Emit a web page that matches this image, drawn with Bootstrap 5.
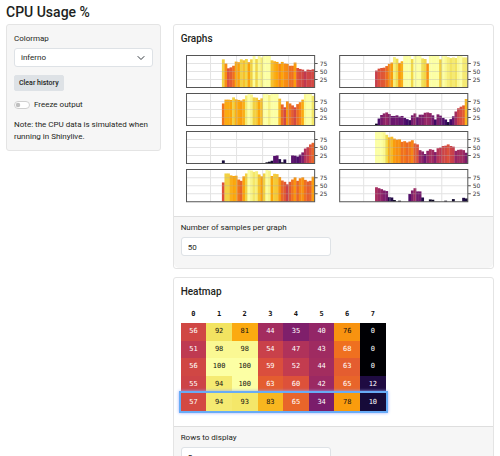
<!DOCTYPE html>
<html lang="en">
<head>
<meta charset="utf-8">
<meta name="viewport" content="width=device-width, initial-scale=1">
<title>CPU Usage %</title>
<link href="https://cdn.jsdelivr.net/npm/bootstrap@5.3.0/dist/css/bootstrap.min.css" rel="stylesheet">
<style>
  body { font: 400 8px/12px Roboto, "Liberation Sans", sans-serif; color: #1d1f21; background: #fff; }
  .page { padding: 5px 6px 12px; }
  h1 { font-size: 14px; line-height: 15px; font-weight: 500; margin: 0 0 4px; }
  h2 { font-size: 10px; line-height: 12px; font-weight: 500; margin: 0; }
  .panels { --bs-gutter-x: 12px; }
  .panel { border-color: #e4e4e4; border-radius: 3px; }
  .panel > .card-body { padding: 8px 7px 7px; }
  .panel > .card-footer { padding: 5px 7px 12px; min-height: 51px; background: #f6f6f6; border-color: #dedede; }
  .options { background: #f6f6f6; }
  .form-label { display: block; margin: 0 0 3px; }
  .form-select, .number-box { font-size: 8px; line-height: 12px; height: 19px; padding: 3px 6px 2px; border-color: #dee2e6; border-radius: 3px; color: #1d1f21; }
  .form-select { padding-right: 18px; background-position: right 7px center; background-size: 8px 8px; }
  .number-box { width: 49%; min-width: 150px; }
  .clear-btn { font-size: 7px; line-height: 10px; font-weight: 500; padding: 2px 4px; margin: 8px 0; border-radius: 2px; background: #dee2e6; border-color: #dee2e6; color: #1d1f21; }
  .freeze { padding: 0; margin: 0 0 8px; min-height: 12px; }
  .freeze .form-check-input { float: none; width: 16px; height: 8px; margin: 0; border-color: #d0d0d0; }
  .graph-body { min-height: 191px; }
  .graphs { display: block; width: 100%; margin-top: 10px; }
  .graphs text { font: 6px "DejaVu Sans", sans-serif; fill: #333; }
  .heat-body { min-height: 148px; }
  .heat { width: 205px; height: 106px; margin: 7px 0 0; table-layout: fixed; border-collapse: separate; border-spacing: 0; font: 7px/9px "DejaVu Sans Mono", monospace; text-align: center; color: #fff; }
  .heat th { height: 18px; font-weight: 700; color: #111; }
  .heat th, .heat td { padding: 0; vertical-align: middle; text-align: center; }
  .heat .dark-text { color: #111; }
  .heat .selected { outline: 2px solid #68acf6; box-shadow: 0 0 3px 2px #9dabff; }
</style>
</head>
<body>
<main class="container-fluid page">
  <h1>CPU Usage %</h1>
  <div class="row panels align-items-start">
    <aside class="col-4">
      <form class="card panel options">
        <div class="card-body">
          <label class="form-label" for="cmap">Colormap</label>
          <select class="form-select" id="cmap"><option>inferno</option><option>viridis</option></select>
          <button class="btn clear-btn" type="button">Clear history</button>
          <div class="form-check form-switch freeze d-flex align-items-center gap-1">
            <input class="form-check-input" type="checkbox" role="switch" id="freeze">
            <label for="freeze">Freeze output</label>
          </div>
          <p class="mb-0">Note: the CPU data is simulated when running in Shinylive.</p>
        </div>
      </form>
    </aside>
    <div class="col-8 d-flex flex-column gap-2">
      <section class="card panel">
        <div class="card-body graph-body">
          <h2>Graphs</h2>
          <svg class="graphs" id="graphs" viewBox="0 0 305 152" role="img" aria-label="CPU usage history"></svg>
        </div>
        <div class="card-footer">
          <label class="form-label" for="samples">Number of samples per graph</label>
          <input class="form-control number-box" type="number" id="samples" value="50">
        </div>
      </section>
      <section class="card panel">
        <div class="card-body heat-body">
          <h2>Heatmap</h2>
          <table class="heat">
            <thead><tr><th>0</th><th>1</th><th>2</th><th>3</th><th>4</th><th>5</th><th>6</th><th>7</th></tr></thead>
            <tbody id="heat"></tbody>
          </table>
        </div>
        <div class="card-footer">
          <label class="form-label" for="rows">Rows to display</label>
          <input class="form-control number-box" type="number" id="rows" value="5">
        </div>
      </section>
    </div>
  </div>
</main>
<script src="https://cdn.jsdelivr.net/npm/bootstrap@5.3.0/dist/js/bootstrap.bundle.min.js"></script>
<script>
  // CPU load history, one list per core, oldest sample first
  const history36 = [
    [88,75,60,63,68,81,79,88,85,89,79,88,99,89,98,94,100,100,100,85,82,80,74,80,75,74,68,68,78,61,58,56,51,56,55,57],
    [53,59,61,62,67,74,78,95,90,77,82,100,100,100,89,100,100,100,91,89,75,100,100,100,100,88,100,98,95,92,94,92,98,100,94,94],
    [69,81,81,80,88,82,80,78,82,94,100,97,88,87,80,85,100,100,96,100,100,100,84,66,57,76,69,63,57,67,73,81,98,100,100,93],
    [6,22,33,38,41,36,30,30,32,28,30,24,20,17,32,38,27,34,34,40,41,39,32,19,35,31,24,19,11,20,29,44,54,59,63,83],
    [10,0,0,0,0,0,0,0,0,0,0,0,0,0,0,2,0,4,6,9,24,26,14,4,13,0,0,26,25,22,28,35,47,52,60,65],
    [100,100,100,98,90,82,84,78,75,76,68,70,66,69,73,63,60,42,38,30,40,45,43,36,48,50,55,56,60,55,53,40,43,44,42,34],
    [60,88,88,82,80,81,69,65,79,88,100,97,93,95,85,79,88,99,97,80,87,86,77,66,62,54,62,69,76,65,73,76,68,63,65,78],
    [45,42,39,35,33,14,13,5,0,3,0,0,0,24,35,42,32,32,13,0,0,7,6,0,0,0,0,3,0,0,8,0,0,0,12,10]
  ];
  const stops = [[0,0,4],[22,11,57],[66,10,104],[106,23,110],[147,38,103],[188,55,84],[221,81,58],[243,120,25],[252,165,10],[240,220,80],[252,255,164]];
  function inferno(v) {
    const i = Math.min(9, Math.floor(v / 10)), f = v / 10 - i;
    return 'rgb(' + stops[i].map((c, k) => Math.round(c + (stops[i + 1][k] - c) * f)).join(',') + ')';
  }
  const W = 128, H = 32, step = W / 50;
  let out = '';
  history36.forEach((values, n) => {
    const x = n % 2 ? 158.5 : 5.5, y = Math.floor(n / 2) * 38 + 0.5;
    out += `<g transform="translate(${x} ${y})">`;
    values.forEach((v, i) => {
      if (v) out += `<rect x="${(i + 14) * step - 0.5}" y="${H - v * H / 100}" width="${step + (i < 35 ? 0.3 : 0.5)}" height="${v * H / 100}" fill="${inferno(v)}"/>`;
    });
    out += '<path d="M24 0V32M50 0V32M76 0V32M102 0V32M0 8H128M0 16H128M0 24H128" fill="none" stroke="#b0b0b0" stroke-opacity=".35"/>';
    out += '<path d="M0 0H128V32H0Z M128 8h3M128 16h3M128 24h3" fill="none" stroke="#555"/>';
    [75, 50, 25].forEach((t, i) => out += `<text x="133" y="${10 + i * 8}">${t}</text>`);
    out += '</g>';
  });
  document.getElementById('graphs').innerHTML = out;

  let rows = '';
  for (let r = 31; r < 36; r++) {
    rows += `<tr class="${r === 35 ? 'selected' : ''}">` + history36.map(h =>
      `<td class="${h[r] > 70 ? 'dark-text' : ''}" style="background:${inferno(h[r])}">${h[r]}</td>`).join('') + '</tr>';
  }
  document.getElementById('heat').innerHTML = rows;
</script>
</body>
</html>
